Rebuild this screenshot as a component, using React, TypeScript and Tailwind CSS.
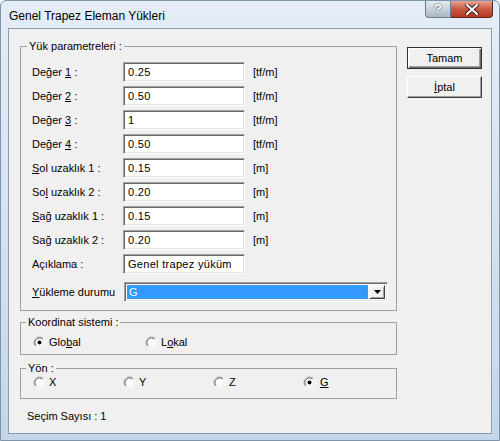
import React from 'react';

const font = { fontFamily: '"Liberation Sans", Arial, sans-serif' };

const Radio: React.FC<{ checked?: boolean }> = ({ checked }) => (
  <svg width="13" height="13" viewBox="0 0 13 13" className="shrink-0">
    <circle cx="6.5" cy="6.5" r="5.5" fill="#ffffff" />
    <path d="M2.61 10.39 A5.5 5.5 0 0 1 10.39 2.61" stroke="#a0a0a0" fill="none" />
    <path d="M10.39 2.61 A5.5 5.5 0 0 1 2.61 10.39" stroke="#ffffff" fill="none" />
    <path d="M3.32 9.68 A4.5 4.5 0 0 1 9.68 3.32" stroke="#696969" fill="none" />
    <path d="M9.68 3.32 A4.5 4.5 0 0 1 3.32 9.68" stroke="#e3e3e3" fill="none" />
    {checked && <circle cx="6.5" cy="6.5" r="2" fill="#000000" />}
  </svg>
);

const Field: React.FC<{ value: string }> = ({ value }) => (
  <div className="w-[122px] h-[20px] bg-white border border-t-[#a0a0a0] border-l-[#a0a0a0] border-b-white border-r-white shadow-[inset_1px_1px_0_#696969,inset_-1px_-1px_0_#e3e3e3] flex items-center pl-[4px] text-[11px] text-black tracking-[0.3px]">
    {value}
  </div>
);

interface RowProps {
  label: React.ReactNode;
  value: string;
  unit?: string;
}

const Row: React.FC<RowProps> = ({ label, value, unit }) => (
  <div className="flex items-center h-[20px]">
    <div className="w-[91px] text-[11px] text-black whitespace-nowrap">{label}</div>
    <Field value={value} />
    {unit && <div className="ml-[8px] text-[11px] text-black">{unit}</div>}
  </div>
);

const App: React.FC = () => {
  return (
    <div
      className="w-[500px] h-[441px] flex flex-col bg-gradient-to-b from-[#e4edf7] via-[#d6e2ef] to-[#c3d6ea] border border-[#7f93ab] rounded-t-[6px] overflow-hidden"
      style={font}
    >
      {/* title bar */}
      <div className="h-[27px] flex items-start justify-between pl-[8px] pr-[6px]">
        <span className="pt-[6px] text-[12px] text-black">Genel Trapez Eleman Yükleri</span>
        <div className="flex">
          <div className="w-[26px] h-[17px] rounded-bl-[4px] border border-t-0 border-[#6d7c90] bg-gradient-to-b from-[#e6ebf1] via-[#c9d2dd] to-[#aab6c5] flex items-center justify-center text-white text-[13px] font-bold [text-shadow:0_0_2px_#1f2d40]">
            ?
          </div>
          <div className="w-[42px] h-[17px] rounded-br-[4px] border border-t-0 border-l-0 border-[#5b2a22] bg-gradient-to-b from-[#e8a493] via-[#c75a43] to-[#b8341c] flex items-center justify-center">
            <svg width="14" height="11" viewBox="0 0 14 11">
              <path d="M2 1 L12 10 M12 1 L2 10" stroke="#3a1c16" strokeWidth="4" strokeLinecap="round" />
              <path d="M2 1 L12 10 M12 1 L2 10" stroke="#ffffff" strokeWidth="2.2" strokeLinecap="round" />
            </svg>
          </div>
        </div>
      </div>

      {/* client area */}
      <div className="flex-1 mx-[7px] mb-[6px] border border-[#8b9bae] bg-[#f0f0f0] flex">
        <div className="flex flex-col pl-[11px] pt-[11px] w-[388px]">
          <fieldset className="border border-[#a0a0a0] pl-[11px] pt-[9px] pb-[8px]">
            <legend className="-ml-[5px] px-[2px] text-[11px] leading-[13px] text-black">Yük parametreleri :</legend>
            <div className="flex flex-col gap-[4px]">
              <Row label={<>Değer <u>1</u> :</>} value="0.25" unit="[tf/m]" />
              <Row label={<>Değer <u>2</u> :</>} value="0.50" unit="[tf/m]" />
              <Row label={<>Değer <u>3</u> :</>} value="1" unit="[tf/m]" />
              <Row label={<>Değer <u>4</u> :</>} value="0.50" unit="[tf/m]" />
              <Row label={<><u>S</u>ol uzaklık 1 :</>} value="0.15" unit="[m]" />
              <Row label={<>So<u>l</u> uzaklık 2 :</>} value="0.20" unit="[m]" />
              <Row label={<><u>S</u>ağ uzaklık 1 :</>} value="0.15" unit="[m]" />
              <Row label={<>Sa<u>ğ</u> uzaklık 2 :</>} value="0.20" unit="[m]" />
              <Row label="Açıklama :" value="Genel trapez yüküm" />
            </div>
            <div className="flex items-center h-[20px] mt-[8px]">
              <div className="w-[92px] text-[11px] text-black whitespace-nowrap">
                <u>Y</u>ükleme durumu
              </div>
              <div className="w-[264px] h-[20px] bg-white border border-t-[#a0a0a0] border-l-[#a0a0a0] border-b-white border-r-white shadow-[inset_1px_1px_0_#696969,inset_-1px_-1px_0_#e3e3e3] flex items-stretch p-[2px]">
                <div className="flex-1 bg-[#3399ff] border border-dotted border-[#c08040] flex items-center pl-[1px] text-[11px] text-white">
                  G
                </div>
                <div className="w-[16px] ml-[1px] bg-[#f0f0f0] border border-t-[#f0f0f0] border-l-[#f0f0f0] border-b-[#404040] border-r-[#404040] shadow-[inset_1px_1px_0_#fff,inset_-1px_-1px_0_#a0a0a0] flex items-center justify-center">
                  <svg width="7" height="4" viewBox="0 0 7 4">
                    <path d="M0 0 H7 L3.5 4 Z" fill="#000" />
                  </svg>
                </div>
              </div>
            </div>
          </fieldset>

          <fieldset className="mt-[5px] border border-[#a0a0a0] pl-[12px] pt-[6px] pb-[5px]">
            <legend className="-ml-[7px] px-[2px] text-[11px] leading-[13px] text-black">Koordinat sistemi :</legend>
            <div className="flex items-center h-[14px]">
              <div className="w-[112px] flex items-center gap-[3px] text-[11px] text-black">
                <Radio checked />
                <span>Glo<u>b</u>al</span>
              </div>
              <div className="flex items-center gap-[3px] text-[11px] text-black">
                <Radio />
                <span>L<u>o</u>kal</span>
              </div>
            </div>
          </fieldset>

          <fieldset className="mt-[7px] border border-[#a0a0a0] pl-[12px] pt-0 pb-[9px]">
            <legend className="-ml-[7px] px-[2px] text-[11px] leading-[13px] text-black">Yön :</legend>
            <div className="flex items-center h-[14px] text-[11px] text-black">
              <div className="w-[90px] flex items-center gap-[3px]">
                <Radio />
                <span>X</span>
              </div>
              <div className="w-[90px] flex items-center gap-[3px]">
                <Radio />
                <span>Y</span>
              </div>
              <div className="w-[90px] flex items-center gap-[3px]">
                <Radio />
                <span>Z</span>
              </div>
              <div className="flex items-center gap-[4px]">
                <Radio checked />
                <span className="underline">G</span>
              </div>
            </div>
          </fieldset>

          <div className="mt-[11px] ml-[7px] text-[11px] leading-[13px] text-black">Seçim Sayısı : 1</div>
        </div>

        <div className="flex flex-col pt-[18px] ml-[10px] gap-[7px]">
          <button className="w-[75px] h-[22px] bg-[#f0f0f0] border border-[#303030] shadow-[inset_1px_1px_0_#fff,inset_-1px_-1px_0_#696969,inset_-2px_-2px_0_#a0a0a0] text-[11px] text-black">
            Tamam
          </button>
          <button className="w-[75px] h-[22px] bg-[#f0f0f0] border border-t-white border-l-white border-b-[#404040] border-r-[#404040] shadow-[inset_-1px_-1px_0_#a0a0a0] text-[11px] text-black">
            <u>İ</u>ptal
          </button>
        </div>
      </div>
    </div>
  );
};

export default App;
